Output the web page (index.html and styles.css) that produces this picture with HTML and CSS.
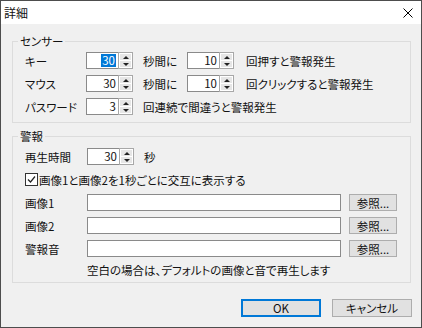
FILE: index.html
```html
<!DOCTYPE html>
<html lang="ja">
<head>
<meta charset="utf-8">
<title>詳細</title>
<link rel="stylesheet" href="styles.css">
</head>
<body>
<div class="window">
  <div class="titlebar">
    <span class="title">詳細</span>
    <svg class="close" viewBox="0 0 10 10" width="10" height="10"><path d="M0.5 0.5L9.5 9.5M9.5 0.5L0.5 9.5" stroke="#000" stroke-width="1" fill="none"/></svg>
  </div>
  <div class="content">
    <fieldset class="group g1">
      <legend>センサー</legend>
      <div class="row">
        <span class="lbl">キー</span>
        <span class="spinner"><span class="num"><span class="sel">30</span></span><span class="spin"><span class="up"></span><span class="down"></span></span></span>
        <span class="mid">秒間に</span>
        <span class="spinner"><span class="num">10</span><span class="spin"><span class="up"></span><span class="down"></span></span></span>
        <span class="tail">回押すと警報発生</span>
      </div>
      <div class="row">
        <span class="lbl">マウス</span>
        <span class="spinner"><span class="num">30</span><span class="spin"><span class="up"></span><span class="down"></span></span></span>
        <span class="mid">秒間に</span>
        <span class="spinner"><span class="num">10</span><span class="spin"><span class="up"></span><span class="down"></span></span></span>
        <span class="tail">回クリックすると警報発生</span>
      </div>
      <div class="row">
        <span class="lbl">パスワード</span>
        <span class="spinner"><span class="num">3</span><span class="spin"><span class="up"></span><span class="down"></span></span></span>
        <span class="after">回連続で間違うと警報発生</span>
      </div>
    </fieldset>
    <fieldset class="group g2">
      <legend>警報</legend>
      <div class="row">
        <span class="lbl">再生時間</span>
        <span class="spinner"><span class="num">30</span><span class="spin"><span class="up"></span><span class="down"></span></span></span>
        <span class="after">秒</span>
      </div>
      <div class="row">
        <span class="check"><svg viewBox="0 0 11 11" width="11" height="11"><path d="M2 5.5L4.5 8L9 2.5" stroke="#222" stroke-width="1.2" fill="none"/></svg></span>
        <span class="checktext">画像1と画像2を1秒ごとに交互に表示する</span>
      </div>
      <div class="row">
        <span class="lbl">画像1</span>
        <span class="field"></span>
        <span class="btn small">参照...</span>
      </div>
      <div class="row">
        <span class="lbl">画像2</span>
        <span class="field"></span>
        <span class="btn small">参照...</span>
      </div>
      <div class="row">
        <span class="lbl">警報音</span>
        <span class="field"></span>
        <span class="btn small">参照...</span>
      </div>
      <div class="row note">
        <span class="lbl"></span>
        <span>空白の場合は、デフォルトの画像と音で再生します</span>
      </div>
    </fieldset>
    <div class="buttons">
      <span class="btn big default">OK</span>
      <span class="btn big">キャンセル</span>
    </div>
  </div>
</div>
</body>
</html>
```
FILE: styles.css
```css
* { box-sizing: border-box; }
html, body { margin: 0; padding: 0; }
body {
  font-family: "Noto Sans CJK JP", "Noto Sans", sans-serif;
  font-size: 11.5px;
  font-feature-settings: "palt";
  color: #111;
  background: #fff;
}
.window {
  width: 422px;
  height: 328px;
  border: 1px solid #4d4d4d;
  background: #f0f0f0;
  display: flex;
  flex-direction: column;
}
.titlebar {
  height: 23px;
  background: #fff;
  display: flex;
  align-items: center;
  justify-content: space-between;
  padding: 0 8px 0 3px;
}
.title { font-size: 12px; line-height: 14px; }
.close { display: block; }
.content {
  flex: 1;
  padding: 10px 10px 0 11px;
  display: flex;
  flex-direction: column;
}
fieldset.group {
  margin: 0;
  border: 1px solid #dcdcdc;
  padding: 1px 8px 4px 12px;
  min-width: 0;
}
fieldset.g2 { margin-top: 6px; padding: 2px 8px 2px 12px; }
legend {
  padding: 0 2px;
  margin-left: -7px;
  line-height: 14px;
}
.row {
  display: flex;
  align-items: center;
  height: 23px;
  white-space: nowrap;
}
.row.note { height: 20px; }
.lbl { width: 61px; flex: none; }
.g2 .lbl { width: 62px; }
.spinner {
  display: flex;
  height: 17px;
  width: 47px;
  flex: none;
}
.num {
  flex: 1;
  border: 1px solid #8a8a8a;
  border-right: none;
  background: #fff;
  text-align: right;
  padding-right: 2px;
  line-height: 15px;
  display: flex;
  justify-content: flex-end;
  align-items: center;
}
.sel { background: #0078d7; color: #fff; line-height: 13px; padding: 0 1px; }
.spin {
  width: 15px;
  border: 1px solid #a8a8a8;
  background: #fff;
  display: flex;
  flex-direction: column;
  padding: 1px;
}
.spin .up, .spin .down {
  flex: 1;
  background: #e6e6e6;
  display: flex;
  align-items: center;
  justify-content: center;
}
.spin .down { border-top: 1px solid #fff; }
.spin .up::before {
  content: "";
  border-left: 3px solid transparent;
  border-right: 3px solid transparent;
  border-bottom: 3px solid #222;
}
.spin .down::before {
  content: "";
  border-left: 3px solid transparent;
  border-right: 3px solid transparent;
  border-top: 3px solid #222;
}
.mid { width: 44px; margin-left: 10px; flex: none; }
.tail { margin-left: 12px; }
.after { margin-left: 10px; }
.check {
  width: 13px;
  height: 13px;
  border: 1px solid #333;
  background: #fff;
  display: flex;
  align-items: center;
  justify-content: center;
  flex: none;
}
.checktext { margin-left: 1px; }
.field {
  width: 254px;
  height: 17px;
  border: 1px solid #8a8a8a;
  background: #fff;
  flex: none;
}
.btn {
  display: flex;
  align-items: center;
  justify-content: center;
  background: #e1e1e1;
  border: 1px solid #adadad;
  flex: none;
}
.btn.small { width: 48px; height: 17px; margin-left: 8px; }
.buttons {
  display: flex;
  justify-content: flex-end;
  gap: 11px;
  margin-top: 16px;
  margin-right: -1px;
}
.btn.big { width: 80px; height: 18px; }
.btn.default { border: 1px solid #0078d7; box-shadow: inset 0 0 0 1px #0078d7; }
```
